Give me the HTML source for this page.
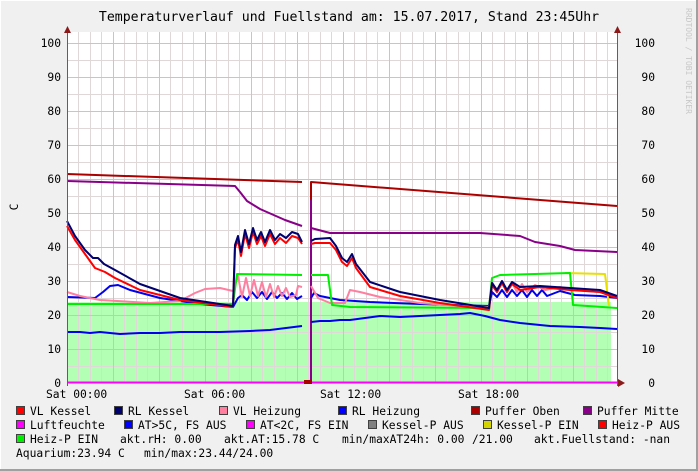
<!DOCTYPE html>
<html><head><meta charset="utf-8"><style>
html,body{margin:0;padding:0;background:#f0f0f0}
svg{display:block}
text{font-family:"DejaVu Sans Mono","Liberation Mono",monospace;fill:#000}
</style></head><body>
<svg width="698" height="471" viewBox="0 0 698 471" xmlns="http://www.w3.org/2000/svg">
<rect x="0" y="0" width="698" height="471" fill="#f0f0f0"/>
<path d="M0 0.5H698M0.5 0V471" stroke="#fff" stroke-width="1"/>
<path d="M0 470H698M697 0V471" stroke="#a0a0a0" stroke-width="2"/>
<text x="349" y="21" font-size="13.2" text-anchor="middle">Temperaturverlauf und Fuellstand am: 15.07.2017, Stand 23:45Uhr</text>
<text transform="translate(686,8) rotate(90)" font-size="8" style="fill:#c8c8c8">RRDTOOL / TOBI OETIKER</text>
<rect x="67" y="32" width="550" height="351" fill="#fff"/>
<rect x="68" y="302" width="543" height="81" fill="#b3ffb3"/>
<g stroke="#e0d8d8" stroke-width="1">
<path d="M78.5 32V383M90.5 32V383M101.5 32V383M124.5 32V383M136.5 32V383M147.5 32V383M170.5 32V383M182.5 32V383M193.5 32V383M216.5 32V383M228.5 32V383M239.5 32V383M262.5 32V383M274.5 32V383M285.5 32V383M308.5 32V383M320.5 32V383M331.5 32V383M354.5 32V383M366.5 32V383M377.5 32V383M400.5 32V383M412.5 32V383M423.5 32V383M446.5 32V383M458.5 32V383M469.5 32V383M492.5 32V383M504.5 32V383M515.5 32V383M538.5 32V383M550.5 32V383M561.5 32V383M584.5 32V383M596.5 32V383M607.5 32V383"/>
<path d="M67 366.5H617M67 332.5H617M67 298.5H617M67 264.5H617M67 230.5H617M67 196.5H617M67 162.5H617M67 128.5H617M67 94.5H617M67 60.5H617"/>
</g>
<g stroke="#f0b4b4" stroke-width="1">
<path d="M113.5 32V383M159.5 32V383M205.5 32V383M251.5 32V383M297.5 32V383M343.5 32V383M389.5 32V383M435.5 32V383M481.5 32V383M527.5 32V383M573.5 32V383"/>
<path d="M67 349.5H617M67 315.5H617M67 281.5H617M67 247.5H617M67 213.5H617M67 179.5H617M67 145.5H617M67 111.5H617M67 77.5H617M67 43.5H617"/>
</g>
<g fill="none" stroke-width="2" stroke-linejoin="round">
<polyline stroke="#aa0000" points="67,174 302,182"/>
<polyline stroke="#aa0000" points="311,200 311,182 617,206"/>
<polyline stroke="#880088" points="311,383 311,200"/>
<polyline stroke="#880088" points="67,181 235,186 240,192 247,201 260,209 285,220 302,226"/>
<polyline stroke="#880088" points="311,228 330,233 480,233 520,236 535,242 560,246 575,250 617,252"/>
<polyline stroke="#0000ee" points="67,332 80,332 90,333 100,332 120,334 140,333 160,333 180,332 200,332 220,332 250,331 270,330 302,326"/>
<polyline stroke="#0000ee" points="311,322 320,321 330,321 340,320 350,320 365,318 380,316 400,317 420,316 440,315 460,314 470,313 485,316 500,320 520,323 550,326 580,327 600,328 617,329"/>
<polyline stroke="#0000ee" points="67,297 95,298 103,292 110,286 118,285 130,290 160,298 200,304 233,307 238,298 242,295 247,300 252,292 257,298 262,292 267,299 272,292 277,298 282,293 287,299 292,293 297,299 302,296"/>
<polyline stroke="#0000ee" points="311,298 314,293 320,296 340,300 370,302 420,304 489,306 492,292 497,297 502,290 507,297 512,290 517,296 522,290 527,297 532,290 537,296 542,290 547,296 560,291 575,295 600,296 617,298"/>
<polyline stroke="#ff7fa0" points="67,292 80,296 100,300 150,303 180,301 195,293 205,289 220,288 233,291 238,276 242,297 246,278 250,296 254,280 258,296 262,282 266,297 270,284 274,297 278,286 282,296 286,288 290,297 296,295 298,286 302,287"/>
<polyline stroke="#ff7fa0" points="311,286 318,298 330,303 345,303 350,290 360,292 380,297 420,303 460,306 489,307 492,282 497,292 502,282 507,292 512,283 517,292 522,284 527,292 535,285 545,290 560,287 575,290 600,292 617,296"/>
<polyline stroke="#00ee00" points="67,304 233,304 237,274 302,275"/>
<polyline stroke="#e8e000" points="565,273 605,274 609,306"/>
<polyline stroke="#00ee00" points="311,275 328,275 332,305 350,307 489,308 492,278 500,275 570,273 573,305 617,308"/>
<polyline stroke="#ff0000" points="67,226 75,240 85,254 95,268 105,272 115,278 140,290 180,300 233,307 235,248 238,240 241,256 245,234 249,248 253,232 257,244 261,236 265,246 270,234 275,244 280,238 286,243 292,236 298,238 302,244"/>
<polyline stroke="#ff0000" points="311,244 315,243 330,243 336,250 342,262 347,266 352,258 356,268 370,287 400,296 440,303 489,310 492,285 497,292 502,283 507,292 512,284 520,290 540,287 570,290 600,292 617,298"/>
<polyline stroke="#00006e" points="67,221 75,236 85,250 93,258 98,258 104,264 115,270 140,284 180,298 233,306 235,245 238,236 241,252 245,230 249,244 253,228 257,240 261,232 265,242 270,230 275,240 280,234 286,238 292,232 298,234 302,242"/>
<polyline stroke="#00006e" points="311,241 315,239 330,238 336,246 342,258 347,262 352,254 356,264 370,282 400,292 440,300 489,308 492,283 497,290 502,281 507,290 512,282 520,287 540,286 570,288 600,290 617,296"/>
</g>
<path d="M67 382.5H620" stroke="#ff00ff" stroke-width="2"/>
<rect x="304" y="380" width="8" height="4" fill="#aa0000"/>
<path d="M67.5 28V386M617.5 28V386" stroke="#606060" stroke-width="1"/>
<path d="M64 33L67.5 26L71 33Z M614 33L617.5 26L621 33Z M618 379L625 383L618 387Z" fill="#8b1a1a"/>
<g font-size="11.3">
<g text-anchor="end">
<text x="61" y="47">100</text><text x="61" y="81">90</text><text x="61" y="115">80</text><text x="61" y="149">70</text><text x="61" y="183">60</text><text x="61" y="217">50</text><text x="61" y="251">40</text><text x="61" y="285">30</text><text x="61" y="319">20</text><text x="61" y="353">10</text><text x="61" y="387">0</text>
<text x="655" y="47">100</text><text x="655" y="81">90</text><text x="655" y="115">80</text><text x="655" y="149">70</text><text x="655" y="183">60</text><text x="655" y="217">50</text><text x="655" y="251">40</text><text x="655" y="285">30</text><text x="655" y="319">20</text><text x="655" y="353">10</text><text x="655" y="387">0</text>
</g>
<text transform="translate(18,207) rotate(-90)" text-anchor="middle">C</text>
<text x="46" y="398">Sat 00:00</text><text x="184" y="398">Sat 06:00</text><text x="320" y="398">Sat 12:00</text><text x="458" y="398">Sat 18:00</text>
</g>
<g stroke="#404040" stroke-width="1">
<rect x="16.5" y="406.5" width="8" height="8" fill="#ff0000"/>
<rect x="114.5" y="406.5" width="8" height="8" fill="#00006e"/>
<rect x="219.5" y="406.5" width="8" height="8" fill="#ff7fa0"/>
<rect x="338.5" y="406.5" width="8" height="8" fill="#0000ff"/>
<rect x="471.5" y="406.5" width="8" height="8" fill="#aa0000"/>
<rect x="583.5" y="406.5" width="8" height="8" fill="#880088"/>
<rect x="16.5" y="420.5" width="8" height="8" fill="#ff00ff"/>
<rect x="124.5" y="420.5" width="8" height="8" fill="#0000ff"/>
<rect x="246.5" y="420.5" width="8" height="8" fill="#ff00ff"/>
<rect x="368.5" y="420.5" width="8" height="8" fill="#808080"/>
<rect x="483.5" y="420.5" width="8" height="8" fill="#d4d400"/>
<rect x="598.5" y="420.5" width="8" height="8" fill="#ff0000"/>
<rect x="16.5" y="434.5" width="8" height="8" fill="#00ee00"/>
</g>
<g font-size="11.3">
<text x="30" y="415">VL Kessel</text>
<text x="128" y="415">RL Kessel</text>
<text x="233" y="415">VL Heizung</text>
<text x="352" y="415">RL Heizung</text>
<text x="485" y="415">Puffer Oben</text>
<text x="597" y="415">Puffer Mitte</text>
<text x="30" y="429">Luftfeuchte</text>
<text x="138" y="429">AT&gt;5C, FS AUS</text>
<text x="260" y="429">AT&lt;2C, FS EIN</text>
<text x="382" y="429">Kessel-P AUS</text>
<text x="497" y="429">Kessel-P EIN</text>
<text x="612" y="429">Heiz-P AUS</text>
<text x="30" y="443">Heiz-P EIN</text>
<text x="120" y="443">akt.rH: 0.00</text>
<text x="224" y="443">akt.AT:15.78 C</text>
<text x="342" y="443">min/maxAT24h: 0.00</text>
<text x="472" y="443">/21.00</text>
<text x="534" y="443">akt.Fuellstand: -nan</text>
<text x="16" y="457">Aquarium:23.94 C</text>
<text x="144" y="457">min/max:23.44/24.00</text>
</g>
</svg>
</body></html>
